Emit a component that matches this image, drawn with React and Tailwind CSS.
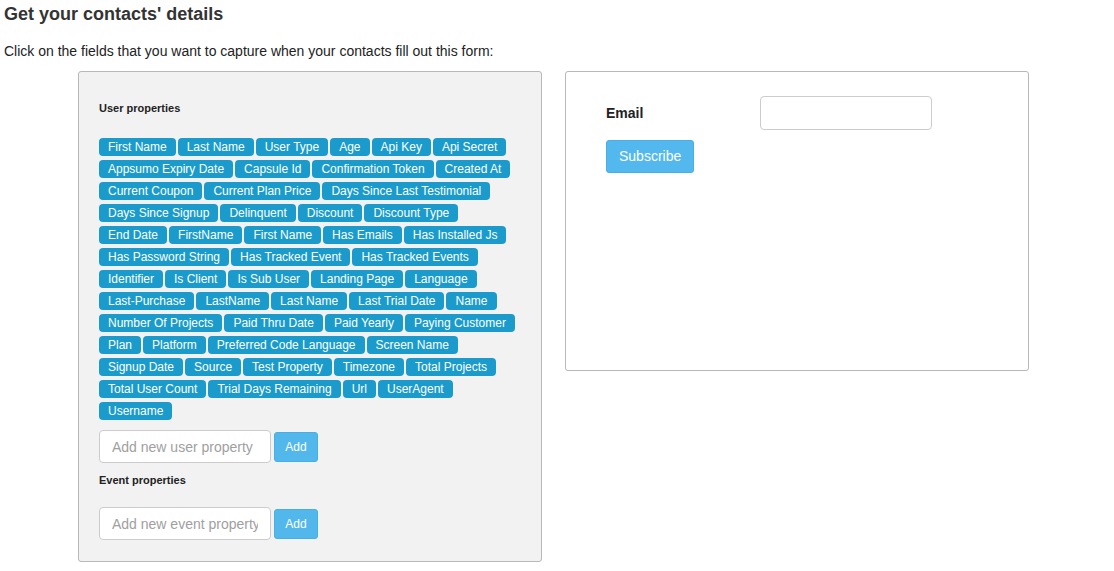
import { useState } from 'react';

const USER_PROPS = [
  'First Name', 'Last Name', 'User Type', 'Age', 'Api Key', 'Api Secret',
  'Appsumo Expiry Date', 'Capsule Id', 'Confirmation Token', 'Created At',
  'Current Coupon', 'Current Plan Price', 'Days Since Last Testimonial',
  'Days Since Signup', 'Delinquent', 'Discount', 'Discount Type',
  'End Date', 'FirstName', 'First Name', 'Has Emails', 'Has Installed Js',
  'Has Password String', 'Has Tracked Event', 'Has Tracked Events',
  'Identifier', 'Is Client', 'Is Sub User', 'Landing Page', 'Language',
  'Last-Purchase', 'LastName', 'Last Name', 'Last Trial Date', 'Name',
  'Number Of Projects', 'Paid Thru Date', 'Paid Yearly', 'Paying Customer',
  'Plan', 'Platform', 'Preferred Code Language', 'Screen Name',
  'Signup Date', 'Source', 'Test Property', 'Timezone', 'Total Projects',
  'Total User Count', 'Trial Days Remaining', 'Url', 'UserAgent',
  'Username',
];

function AddRow({ placeholder }) {
  const [value, setValue] = useState('');
  return (
    <div className="flex items-center gap-[3px]">
      <input
        type="text"
        value={value}
        onChange={(e) => setValue(e.target.value)}
        placeholder={placeholder}
        className="w-[172px] h-[33px] px-3 text-[14px] bg-white border border-[#cccccc] rounded-[4px] placeholder:text-[#a0a0a0] outline-none"
      />
      <button
        type="button"
        className="h-[30px] w-[44px] text-[12px] text-white bg-[#52b8ec] border border-[#46afe6] rounded-[3px]"
      >
        Add
      </button>
    </div>
  );
}

export default function App() {
  return (
    <div className="min-h-[571px] bg-white text-[#222] font-['Liberation_Sans',Arial,sans-serif]">
      <h1 className="pl-[4px] pt-[3px] text-[18px] font-bold leading-[22px] text-[#333]">
        Get your contacts' details
      </h1>
      <p className="pl-[4px] mt-[17px] text-[14px] leading-[18px] text-[#222]">
        Click on the fields that you want to capture when your contacts fill out this form:
      </p>

      <div className="flex items-start gap-[23px] pl-[78px] mt-[11px]">
        {/* Field picker */}
        <section className="w-[464px] bg-[#f2f2f2] border border-[#b8b8b8] rounded-[3px] px-[20px] pt-[29px] pb-[21px]">
          <p className="text-[11px] font-bold leading-[14px] text-[#222]">User properties</p>
          <ul className="flex flex-wrap gap-x-[2px] gap-y-[4px] mt-[23px]" role="list">
            {USER_PROPS.map((p, i) => (
              <li
                key={i}
                className="h-[18px] px-[9px] bg-[#1a9bcb] text-white text-[12px] leading-[18px] rounded-[4px] cursor-pointer"
              >
                {p}
              </li>
            ))}
          </ul>
          <div className="mt-[10px]">
            <AddRow placeholder="Add new user property" />
          </div>
          <p className="mt-[10px] text-[11px] font-bold leading-[14px] text-[#222]">Event properties</p>
          <div className="mt-[20px]">
            <AddRow placeholder="Add new event property" />
          </div>
        </section>

        {/* Preview form */}
        <section className="w-[464px] h-[300px] bg-white border border-[#b8b8b8] rounded-[3px] pl-[40px] pt-[24px]">
          <div className="flex items-center">
            <label className="w-[154px] text-[14px] font-bold text-[#222]">Email</label>
            <input
              type="text"
              className="w-[172px] h-[34px] px-3 bg-white border border-[#cccccc] rounded-[4px] outline-none"
            />
          </div>
          <button
            type="button"
            className="mt-[10px] h-[33px] px-[12px] text-[14px] text-white bg-[#52b8ee] border border-[#46afe6] rounded-[3px]"
          >
            Subscribe
          </button>
        </section>
      </div>
    </div>
  );
}
